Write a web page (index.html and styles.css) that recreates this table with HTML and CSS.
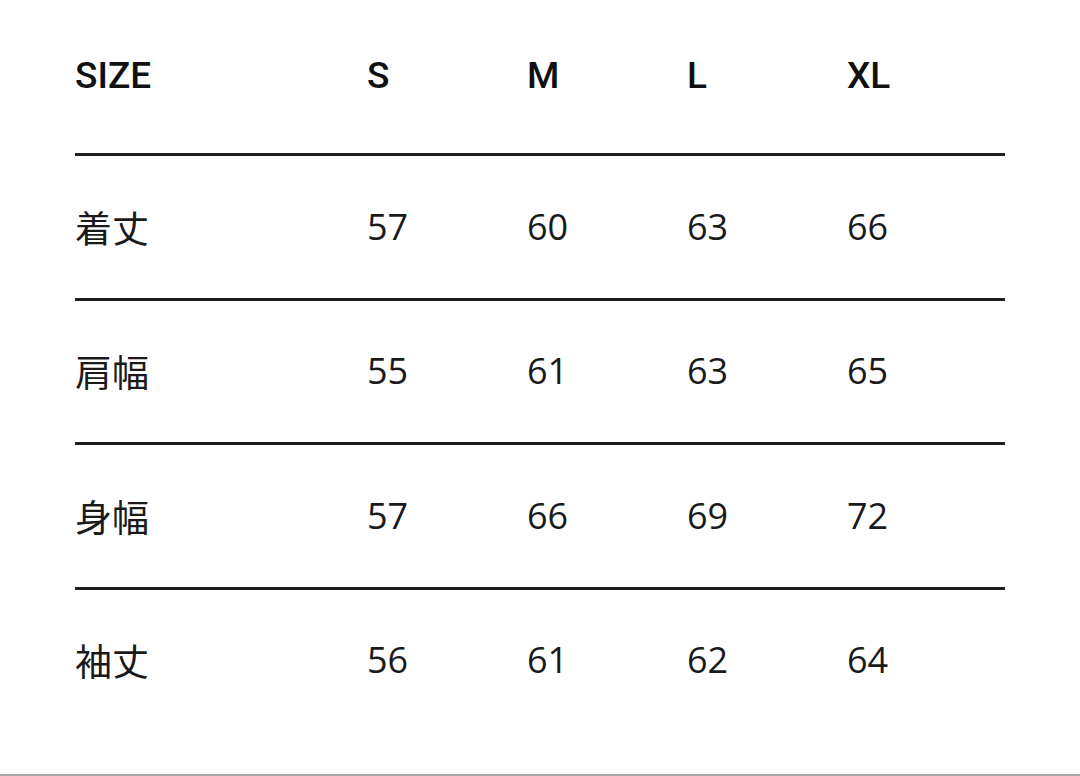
FILE: index.html
```html
<!DOCTYPE html>
<html lang="ja">
<head>
<meta charset="utf-8">
<title>Size chart</title>
<link rel="stylesheet" href="styles.css">
</head>
<body>
<div class="page">
  <div class="chart">
    <div class="row head">
      <div class="cell label">SIZE</div>
      <div class="cell">S</div>
      <div class="cell">M</div>
      <div class="cell">L</div>
      <div class="cell">XL</div>
    </div>
    <div class="row">
      <div class="cell label jp">着丈</div>
      <div class="cell">57</div>
      <div class="cell">60</div>
      <div class="cell">63</div>
      <div class="cell">66</div>
    </div>
    <div class="row">
      <div class="cell label jp">肩幅</div>
      <div class="cell">55</div>
      <div class="cell">61</div>
      <div class="cell">63</div>
      <div class="cell">65</div>
    </div>
    <div class="row">
      <div class="cell label jp">身幅</div>
      <div class="cell">57</div>
      <div class="cell">66</div>
      <div class="cell">69</div>
      <div class="cell">72</div>
    </div>
    <div class="row last">
      <div class="cell label jp">袖丈</div>
      <div class="cell">56</div>
      <div class="cell">61</div>
      <div class="cell">62</div>
      <div class="cell">64</div>
    </div>
  </div>
</div>
<div class="bottom-rule"></div>
</body>
</html>
```
FILE: styles.css
```css
html, body {
  margin: 0;
  padding: 0;
  background: #ffffff;
}
body {
  width: 1080px;
  height: 776px;
  overflow: hidden;
  display: flex;
  flex-direction: column;
}
.page {
  flex: 1;
  padding: 0 75px;
}
.chart {
  width: 930px;
}
.row {
  display: grid;
  grid-template-columns: 292px 160px 160px 160px 1fr;
  align-items: center;
  height: 141.5px;
  border-bottom: 3px solid #1e1e1e;
  font-family: "Open Sans", "Noto Sans CJK JP", sans-serif;
  font-size: 36px;
  color: #1a1a1a;
}
.row.head {
  height: 153px;
  align-items: start;
  font-family: Roboto, "Liberation Sans", sans-serif;
  font-weight: 500;
  font-size: 37px;
  color: #111111;
}
.row.head .cell {
  padding-top: 54px;
  line-height: 44px;
}
.row.last {
  border-bottom: none;
}
.cell {
  line-height: 44px;
  white-space: nowrap;
}
.jp {
  font-family: "Noto Sans CJK JP", sans-serif;
  font-size: 37px;
  font-weight: 400;
}
.bottom-rule {
  height: 2px;
  background: #a8a8a8;
}
```
